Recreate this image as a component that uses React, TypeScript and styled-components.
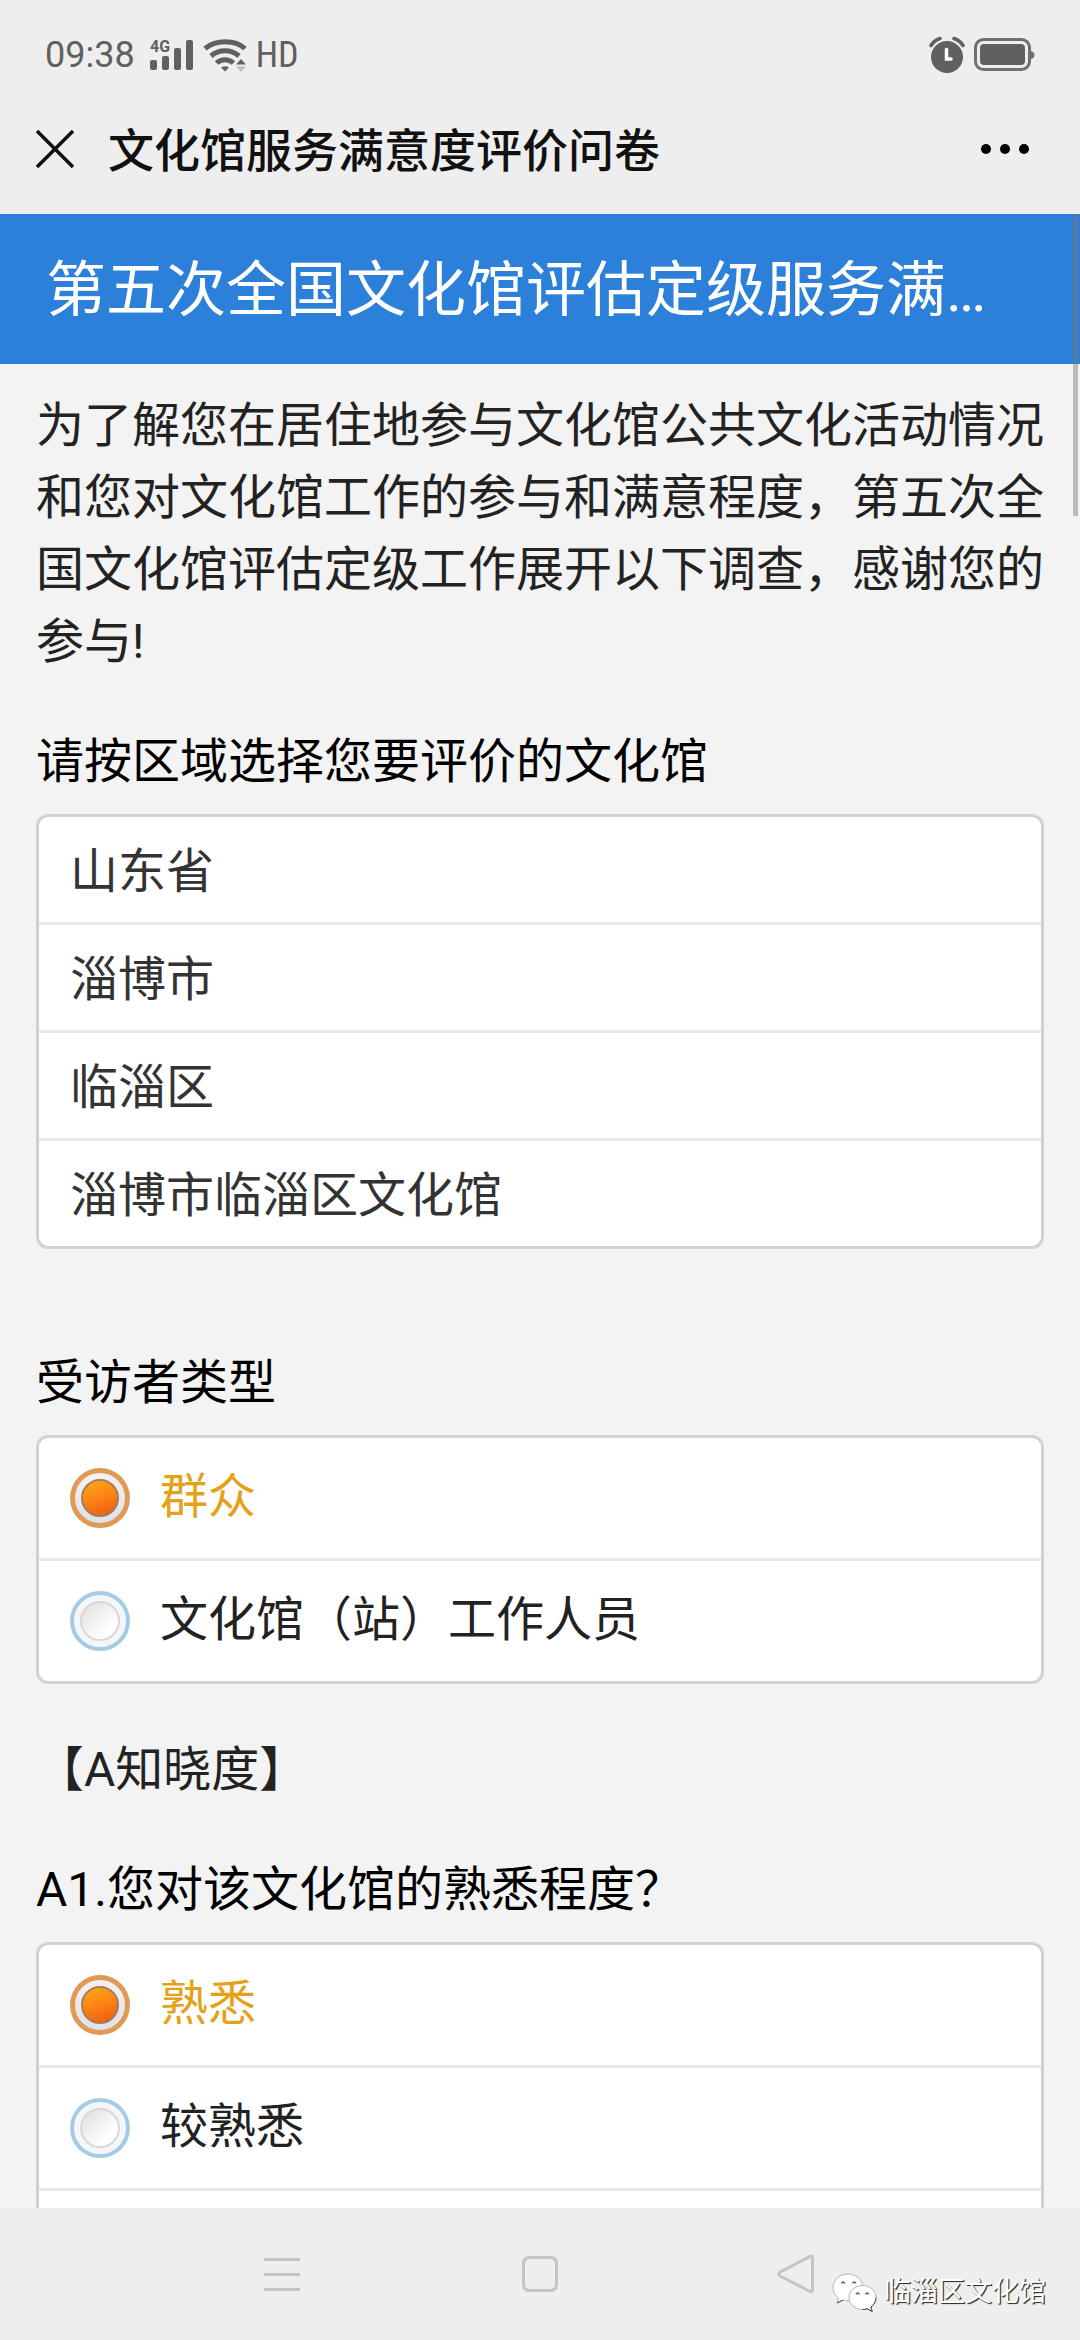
import React, { useState } from "react";
import styled, { createGlobalStyle } from "styled-components";

const GlobalStyle = createGlobalStyle`
  *, *::before { box-sizing: border-box; }
  html, body { margin: 0; padding: 0; }
  body {
    background: #f3f3f3;
    color: #222;
    font-family: Roboto, "Noto Sans CJK SC", sans-serif;
    font-size: 48px;
    line-height: 72px;
  }
`;

const Screen = styled.div`
  position: relative;
  display: flex;
  flex-direction: column;
  height: 100vh;
  overflow: hidden;
`;

const TopArea = styled.header`
  flex: none;
  background: #eee;
`;

const StatusBar = styled.div`
  display: flex;
  align-items: center;
  justify-content: space-between;
  height: 84px;
  padding: 26px 45px 0;
  color: #606060;
  font-size: 36px;
  line-height: 58px;
`;

const StatusGroup = styled.div`
  display: flex;
  align-items: center;
  gap: 9px;
`;

const Clock = styled.span`
  margin-right: 6px;
`;

const HdMark = styled.span`
  font-family: "Roboto Condensed", "Liberation Sans Narrow", Roboto, sans-serif;
`;

const TitleBar = styled.div`
  display: flex;
  align-items: center;
  height: 130px;
  padding: 0 48px 0 36px;
`;

const IconButton = styled.button`
  display: flex;
  align-items: center;
  justify-content: center;
  padding: 0;
  border: 0;
  background: none;
  color: inherit;
  cursor: pointer;
`;

const PageTitle = styled.h1`
  flex: 1;
  margin: 0;
  padding: 4px 0 0 34px;
  color: #111;
  font-size: 46px;
  font-weight: 500;
`;

const Content = styled.main`
  position: relative;
  flex: 1;
  min-height: 0;
  overflow: hidden;
`;

const Banner = styled.h2`
  margin: 0;
  padding: 41px 46px 37px;
  overflow: hidden;
  background: #2d80d9;
  color: #fff;
  font-size: 60px;
  font-weight: 400;
  line-height: 72px;
  white-space: nowrap;
`;

const Survey = styled.form`
  display: flex;
  flex-direction: column;
  gap: 48px;
  padding: 26px 36px;
`;

const Intro = styled.p`
  margin: 0;
`;

const Group = styled.fieldset<{ $spaced?: boolean }>`
  min-width: 0;
  margin: 0 0 ${(p) => (p.$spaced ? 50 : 2)}px;
  padding: 0;
  border: 0;
`;

const Question = styled.legend`
  padding: 0 0 16px;
  color: #000;
`;

const Card = styled.div`
  display: flex;
  flex-direction: column;
  overflow: hidden;
  border: 3px solid #d2d2d2;
  border-radius: 12px;
  background: #fff;

  > * + * {
    border-top: 3px solid #e8e8e8;
  }
`;

const RegionRow = styled.div`
  display: flex;
`;

const RegionSelect = styled.select`
  flex: 1;
  height: 105px;
  padding: 4px 31px 0;
  border: 0;
  outline: 0;
  appearance: none;
  background: transparent;
  color: #333;
  font: inherit;
`;

const OptionRow = styled.label<{ $checked?: boolean }>`
  display: flex;
  align-items: center;
  gap: 30px;
  box-sizing: content-box;
  height: 120px;
  padding: 0 31px;
  color: ${(p) => (p.$checked ? "#e3a21a" : "#222")};
  cursor: pointer;
`;

const OptionText = styled.span`
  padding-bottom: 2px;
`;

const Radio = styled.input`
  display: flex;
  align-items: center;
  justify-content: center;
  flex: none;
  width: 60px;
  height: 60px;
  margin: 0;
  appearance: none;
  border: 4px solid #a3cbe6;
  border-radius: 50%;
  background: #f5f6f7;
  background-clip: padding-box;

  &::before {
    content: "";
    width: 40px;
    height: 40px;
    border: 2px solid #d8d8d8;
    border-radius: 50%;
    background: linear-gradient(135deg, #dedede, #fff 75%);
  }

  &:checked {
    border: 5px solid #e09a58;
    background: linear-gradient(#f4f2f0, #dfe1e6);
  }

  &:checked::before {
    width: 38px;
    height: 38px;
    border: 2px solid #a67a5a;
    background: linear-gradient(160deg, #ffab14, #fb7d14 55%, #ea5a10);
  }
`;

const Section = styled.p`
  margin: 0;
`;

const ScrollThumb = styled.div`
  position: absolute;
  top: 0;
  right: 2px;
  width: 5px;
  height: 302px;
  background: rgba(120, 120, 120, 0.45);
`;

const NavBar = styled.nav`
  display: flex;
  flex: none;
  justify-content: center;
  height: 132px;
  background: #eee;
`;

const NavButton = styled(IconButton)`
  width: 258px;
`;

const Watermark = styled.div`
  position: absolute;
  right: 34px;
  bottom: 28px;
  display: flex;
  align-items: center;
  gap: 6px;
  color: #fff;
  font-size: 27px;
  line-height: 39px;
  text-shadow: 1px 1px 1px #333, 1px 1px 0 #555;
`;

const SignalIcon = () => (
  <svg width="44" height="44" viewBox="0 -6 44 44" fill="#606060">
    <text x="0" y="13" fontSize="16" fontWeight="700" fontFamily="Roboto, sans-serif">4G</text>
    <rect x="0" y="21" width="7" height="10" rx="2" />
    <rect x="12" y="17" width="7" height="14" rx="2" />
    <rect x="24" y="9" width="7" height="22" rx="2" />
    <rect x="36" y="1" width="7" height="30" rx="2" />
  </svg>
);

const WifiIcon = () => (
  <svg width="44" height="34" viewBox="0 0 44 34" fill="none" stroke="#606060" strokeWidth="5">
    <path d="M2 10.5C13 1.500 32 1.500 42 10.500" />
    <path d="M8 18C16 11 28 11 36 18" />
    <path d="M13.500 25C18.500 20.500 25.500 20.500 30.500 25" />
    <path d="M18 29.500q4-2.500 8 0L22 33.500z" fill="#606060" stroke="none" />
    <path d="M33 26.500h10L38 21z" fill="#606060" stroke="none" />
    <path d="M33 28.500h10L38 34z" fill="#bdbdbd" stroke="none" />
  </svg>
);

const AlarmIcon = () => (
  <svg width="36" height="38" viewBox="0 0 36 38" fill="none" strokeLinecap="round">
    <circle cx="18" cy="21" r="16" fill="#606060" />
    <path d="M2 9.500Q5 4.500 11 2.500M34 9.500Q31 4.500 25 2.500" stroke="#606060" strokeWidth="3.500" />
    <path d="M17.500 13.500V23H22" stroke="#fff" strokeWidth="3.500" />
  </svg>
);

const BatteryIcon = () => (
  <svg width="61" height="34" viewBox="0 0 61 34">
    <rect x="1.500" y="1.500" width="54" height="30" rx="8" fill="none" stroke="#707070" strokeWidth="3" />
    <rect x="6" y="6" width="45" height="21" rx="4" fill="#606060" />
    <path d="M57 13q3.500 1 3.500 4T57 21z" fill="#707070" />
  </svg>
);

const CloseIcon = () => (
  <svg width="38" height="38" viewBox="0 0 38 38" stroke="#111" strokeWidth="3.500">
    <path d="M1 1L37 37M37 1L1 37" />
  </svg>
);

const MoreIcon = () => (
  <svg width="52" height="12" viewBox="0 0 52 12" fill="#000">
    <circle cx="6" cy="6" r="5" />
    <circle cx="25" cy="6" r="5" />
    <circle cx="44" cy="6" r="5" />
  </svg>
);

const NavIcon = ({ d }: { d: string }) => (
  <svg width="42" height="42" viewBox="0 0 42 42" fill="none" stroke="#c4c4c4" strokeWidth="3" strokeLinejoin="round">
    <path d={d} />
  </svg>
);

const WeChatIcon = () => (
  <svg width="46" height="40" viewBox="0 0 46 40" fill="#fff" stroke="#b4b4b4" strokeWidth="1">
    <path d="M16 2C7.500 2 1 8 1 15.500c0 4.500 2 8 5.500 10.500L5 31l6-3c1.600.5 3.300.7 5 .7 8.500 0 15-6 15-13.200S24.500 2 16 2z" />
    <path d="M30.500 13.500c-7.500 0-13.500 5.300-13.500 12s6 12 13.500 12c1.700 0 3.300-.2 4.700-.7l5 2.700-1.200-4.500c3-2.200 5-5.500 5-9.500 0-6.700-6-12-13.500-12z" />
    <path d="M9.500 11.500q1.500-3 3.500 0M20.500 11.500q1.500-3 3.500 0M24 22.500q1.500-3 3.500 0M33.500 22.500q1.500-3 3.500 0" fill="none" stroke="#555" strokeWidth="1.300" />
    <path d="M5 31l6-3M30.500 37.500c1.700 0 3.300-.2 4.700-.7l5 2.700-1.200-4.500c3-2.200 5-5.500 5-9.500" fill="none" stroke="#444" />
  </svg>
);

const regions = [
  { label: "省份", value: "山东省" },
  { label: "城市", value: "淄博市" },
  { label: "区县", value: "临淄区" },
  { label: "文化馆", value: "淄博市临淄区文化馆" },
];

interface ChoiceGroupProps {
  name: string;
  title: string;
  options: string[];
  more?: boolean;
}

function ChoiceGroup({ name, title, options, more }: ChoiceGroupProps) {
  const [selected, setSelected] = useState(options[0]);
  return (
    <Group>
      <Question>{title}</Question>
      <Card>
        {options.map((option) => (
          <OptionRow key={option} $checked={option === selected}>
            <Radio
              type="radio"
              name={name}
              value={option}
              checked={option === selected}
              onChange={() => setSelected(option)}
            />
            <OptionText>{option}</OptionText>
          </OptionRow>
        ))}
        {more && <OptionRow as="div" />}
      </Card>
    </Group>
  );
}

export default function App() {
  return (
    <Screen>
      <GlobalStyle />
      <TopArea>
        <StatusBar>
          <StatusGroup>
            <Clock>09:38</Clock>
            <SignalIcon />
            <WifiIcon />
            <HdMark>HD</HdMark>
          </StatusGroup>
          <StatusGroup>
            <AlarmIcon />
            <BatteryIcon />
          </StatusGroup>
        </StatusBar>
        <TitleBar>
          <IconButton type="button" aria-label="关闭">
            <CloseIcon />
          </IconButton>
          <PageTitle>文化馆服务满意度评价问卷</PageTitle>
          <IconButton type="button" aria-label="更多">
            <MoreIcon />
          </IconButton>
        </TitleBar>
      </TopArea>

      <Content>
        <Banner>第五次全国文化馆评估定级服务满…</Banner>
        <Survey>
          <Intro>
            为了解您在居住地参与文化馆公共文化活动情况和您对文化馆工作的参与和满意程度，第五次全国文化馆评估定级工作展开以下调查，感谢您的参与!
          </Intro>
          <Group $spaced>
            <Question>请按区域选择您要评价的文化馆</Question>
            <Card>
              {regions.map((region) => (
                <RegionRow key={region.label}>
                  <RegionSelect aria-label={region.label} defaultValue={region.value}>
                    <option>{region.value}</option>
                  </RegionSelect>
                </RegionRow>
              ))}
            </Card>
          </Group>
          <ChoiceGroup name="visitor" title="受访者类型" options={["群众", "文化馆（站）工作人员"]} />
          <Section>【A知晓度】</Section>
          <ChoiceGroup name="a1" title="A1.您对该文化馆的熟悉程度？" options={["熟悉", "较熟悉"]} more />
        </Survey>
        <ScrollThumb />
      </Content>

      <NavBar>
        <NavButton type="button" aria-label="菜单">
          <NavIcon d="M3 6.500H39M3 21.500H39M3 36.500H39" />
        </NavButton>
        <NavButton type="button" aria-label="主页">
          <NavIcon d="M11 4.500H31Q37.500 4.500 37.500 11V31Q37.500 37.500 31 37.500H11Q4.500 37.500 4.500 31V11Q4.500 4.500 11 4.500Z" />
        </NavButton>
        <NavButton type="button" aria-label="返回">
          <NavIcon d="M33 3.500Q35.500 2.500 35.500 5V37Q35.500 39.500 33 38.500L3 23Q0.500 21 3 19Z" />
        </NavButton>
      </NavBar>

      <Watermark>
        <WeChatIcon />
        临淄区文化馆
      </Watermark>
    </Screen>
  );
}
